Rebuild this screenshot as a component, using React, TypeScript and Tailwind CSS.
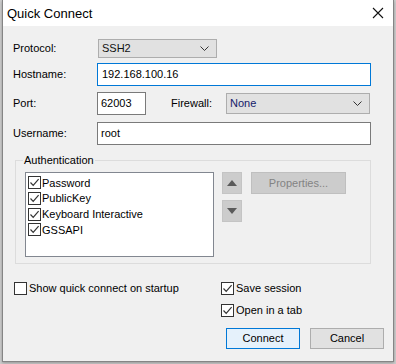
import React from 'react';

const font = { fontFamily: '"Liberation Sans", Arial, sans-serif' };

const CheckBox = ({ checked }: { checked: boolean }) => (
  <span className="flex h-[13px] w-[13px] shrink-0 items-center justify-center border border-[#333333] bg-white">
    {checked && (
      <svg width="11" height="11" viewBox="0 0 11 11">
        <path d="M1.5 5.5 L4.2 8.3 L9.6 2.2" fill="none" stroke="#333333" strokeWidth="1.2" />
      </svg>
    )}
  </span>
);

const Chevron = () => (
  <svg width="9" height="5" viewBox="0 0 9 5" className="shrink-0">
    <path d="M0.5 0.5 L4.5 4.5 L8.5 0.5" fill="none" stroke="#333333" strokeWidth="1" />
  </svg>
);

const Select = ({ value, width, height, textClass }: { value: string; width: string; height: string; textClass: string }) => (
  <div className={`flex items-center justify-between border border-[#adadad] bg-[#e1e1e1] pl-[3px] pr-[7px] ${width} ${height}`}>
    <span className={textClass}>{value}</span>
    <Chevron />
  </div>
);

const authMethods = ['Password', 'PublicKey', 'Keyboard Interactive', 'GSSAPI'];

export default function App() {
  return (
    <div className="h-[364px] w-[396px] overflow-hidden bg-[#cfcfcf] text-[11px] text-black" style={font}>
      <div className="ml-[2px] flex h-[362px] w-[392px] flex-col border-x border-b border-[#858585] bg-[#f0f0f0] shadow-[0_1px_3px_rgba(0,0,0,0.3)]">
        {/* title bar */}
        <div className="flex h-[26px] shrink-0 items-center justify-between bg-white pl-[4px] pr-[9px]">
          <span className="text-[13px] leading-none">Quick Connect</span>
          <svg width="12" height="12" viewBox="0 0 12 12">
            <path d="M1 1 L11 11 M11 1 L1 11" stroke="#111111" strokeWidth="1.1" />
          </svg>
        </div>

        <div className="flex flex-col pl-[10px]">
          <div className="mt-[13px] flex h-[19px] items-center">
            <span className="w-[85px]">Protocol:</span>
            <Select value="SSH2" width="w-[119px]" height="h-[19px]" textClass="text-[#111]" />
          </div>

          <div className="mt-[5px] flex h-[23px] items-center">
            <span className="w-[84px]">Hostname:</span>
            <div className="flex h-[23px] w-[274px] items-center border border-[#0078d7] bg-white pl-[4px]">
              192.168.100.16
            </div>
          </div>

          <div className="mt-[6px] flex h-[23px] items-center">
            <span className="w-[84px]">Port:</span>
            <div className="flex h-[23px] w-[49px] items-center border border-[#7a7a7a] bg-white pl-[3px]">62003</div>
            <span className="ml-[25px] w-[55px]">Firewall:</span>
            <Select value="None" width="w-[144px]" height="h-[21px]" textClass="text-[#14206a]" />
          </div>

          <div className="mt-[7px] flex h-[23px] items-center">
            <span className="w-[84px]">Username:</span>
            <div className="flex h-[23px] w-[274px] items-center border border-[#7a7a7a] bg-white pl-[3px]">root</div>
          </div>

          <fieldset className="ml-[2px] mt-[8px] w-[356px] border border-[#dcdcdc] pb-[6px]">
            <legend className="ml-[7px] px-[1px] leading-[14px]">Authentication</legend>
            <div className="mt-[5px] flex items-start">
              <div className="ml-[9px] flex h-[85px] w-[189px] flex-col border border-[#828790] bg-white pl-[2px] pt-[2px]">
                {authMethods.map(m => (
                  <div key={m} className="flex h-[15.7px] items-center gap-[1px]">
                    <CheckBox checked />
                    <span>{m}</span>
                  </div>
                ))}
              </div>
              <div className="ml-[8px] flex flex-col gap-[6px]">
                <div className="flex h-[22px] w-[20px] items-center justify-center border border-[#c4c4c4] bg-[#cccccc]">
                  <svg width="10" height="6" viewBox="0 0 10 6"><path d="M5 0 L10 6 L0 6 Z" fill="#5a5a5a" /></svg>
                </div>
                <div className="flex h-[22px] w-[20px] items-center justify-center border border-[#c4c4c4] bg-[#cccccc]">
                  <svg width="10" height="6" viewBox="0 0 10 6"><path d="M0 0 L10 0 L5 6 Z" fill="#5a5a5a" /></svg>
                </div>
              </div>
              <div className="ml-[9px] flex h-[22px] w-[95px] items-center justify-center border border-[#bfbfbf] bg-[#cccccc] text-[#838383]">
                Properties...
              </div>
            </div>
          </fieldset>

          <div className="mt-[18px] flex">
            <div className="ml-[1px] flex h-[13px] w-[207px] items-center gap-[2px]">
              <CheckBox checked={false} />
              <span>Show quick connect on startup</span>
            </div>
            <div className="flex flex-col gap-[9px]">
              <div className="flex h-[13px] items-center gap-[2px]">
                <CheckBox checked />
                <span>Save session</span>
              </div>
              <div className="flex h-[13px] items-center gap-[2px]">
                <CheckBox checked />
                <span>Open in a tab</span>
              </div>
            </div>
          </div>

          <div className="mt-[11px] flex gap-[10px] pl-[213px]">
            <div className="flex h-[21px] w-[74px] items-center justify-center border border-[#0078d7] bg-[#e5f1fb]">Connect</div>
            <div className="flex h-[21px] w-[74px] items-center justify-center border border-[#adadad] bg-[#e1e1e1]">Cancel</div>
          </div>
        </div>
      </div>
    </div>
  );
}
